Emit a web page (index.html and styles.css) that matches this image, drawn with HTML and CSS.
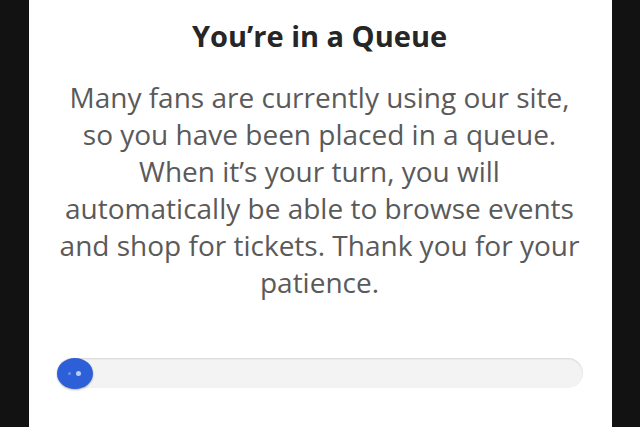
FILE: index.html
```html
<!DOCTYPE html>
<html lang="en">
<head>
    <meta charset="UTF-8">
    <meta name="viewport" content="width=device-width, initial-scale=1.0">
    <title>Queue</title>
    <link rel="stylesheet" href="styles.css">
</head>
<body>

    <div class="page">
        <section class="card">
            <h1>You’re in a Queue</h1>
            <p class="message">Many fans are currently using our site,<br> so you have been placed in a queue.<br> When it’s your turn, you will<br> automatically be able to browse events<br> and shop for tickets. Thank you for your<br> patience.</p>

            <div class="progress">
                <div class="progress-dot">
                    <span class="pip pip-dim"></span>
                    <span class="pip"></span>
                </div>
            </div>
        </section>
    </div>

</body>
</html>
```

FILE: styles.css
```css
body {
    margin: 0;
    padding: 0;
    background-color: #121212;
    font-family: "Open Sans", "Noto Sans", sans-serif;
}
.page {
    width: 640px;
    height: 427px;
    overflow: hidden;
    display: flex;
    justify-content: center;
}
.card {
    width: 583px;
    background-color: #fff;
    box-sizing: border-box;
    padding: 18px 29px 0 28px;
    text-align: center;
}
h1 {
    margin: 0;
    font-size: 29px;
    font-weight: 700;
    color: #262626;
    line-height: 36px;
}
.message {
    margin: 25px 0 0 0;
    font-size: 28px;
    line-height: 37px;
    color: #5a5a5a;
    white-space: nowrap;
}
.progress {
    margin: 57px 0 0 0;
    height: 30px;
    border-radius: 15px;
    background-color: #f3f3f3;
    box-shadow: inset 0 1px 2px rgba(0, 0, 0, 0.12);
    display: flex;
    align-items: center;
}
.progress-dot {
    width: 36px;
    height: 31px;
    border-radius: 50%;
    background-color: #2d5fd8;
    box-shadow: 0 1px 2px rgba(0, 0, 0, 0.3);
    display: flex;
    align-items: center;
    justify-content: center;
    gap: 5px;
}
.pip {
    width: 5px;
    height: 5px;
    border-radius: 50%;
    background-color: #b9cdf7;
}
.pip-dim {
    width: 3px;
    height: 3px;
    background-color: #6d8fe6;
}
```
